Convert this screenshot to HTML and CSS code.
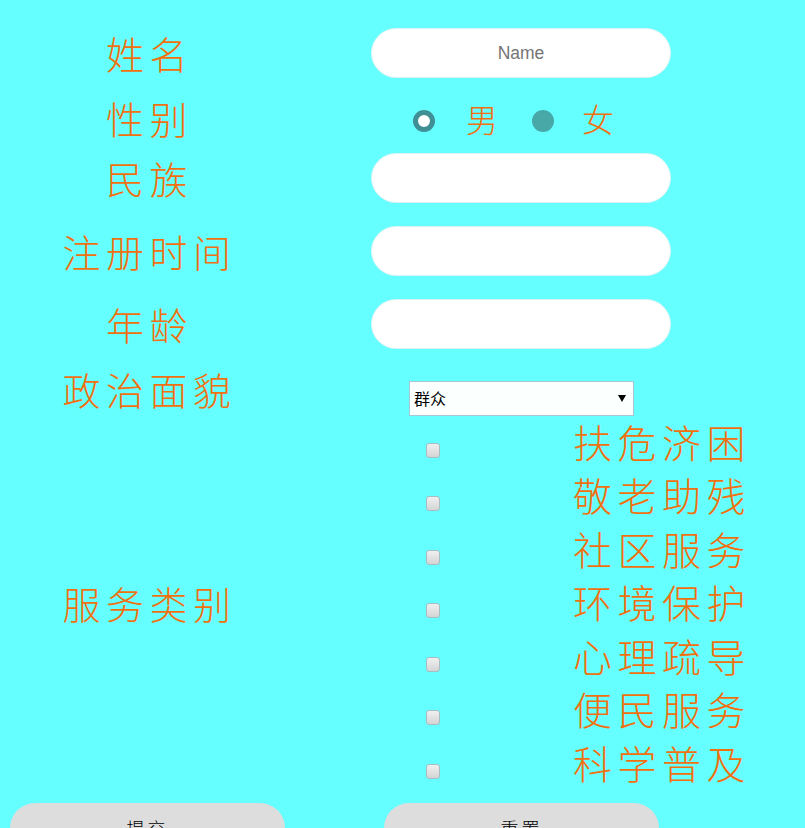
FILE: index.html
```html
<!DOCTYPE html>
<html lang="zh-CN">
<head>
    <meta charset="UTF-8">
    <meta name="viewport" content="width=device-width, initial-scale=1.0">
    <title>志愿者注册</title>
    <link rel="stylesheet" href="styles.css">
</head>
<body>
    <form class="register-form">
        <div class="row row-name">
            <label class="row-label" for="name">姓名</label>
            <div class="row-field">
                <input class="text-input" type="text" id="name" placeholder="Name">
            </div>
        </div>

        <div class="row row-sex">
            <span class="row-label">性别</span>
            <div class="row-field radio-group">
                <input class="radio" type="radio" name="sex" checked>
                <span class="radio-text">男</span>
                <input class="radio" type="radio" name="sex">
                <span class="radio-text">女</span>
            </div>
        </div>

        <div class="row row-nation">
            <label class="row-label" for="nation">民族</label>
            <div class="row-field">
                <input class="text-input" type="text" id="nation">
            </div>
        </div>

        <div class="row row-spaced">
            <label class="row-label" for="regdate">注册时间</label>
            <div class="row-field">
                <input class="text-input" type="text" id="regdate">
            </div>
        </div>

        <div class="row row-spaced">
            <label class="row-label" for="age">年龄</label>
            <div class="row-field">
                <input class="text-input" type="text" id="age">
            </div>
        </div>

        <div class="row row-politics">
            <label class="row-label" for="politics">政治面貌</label>
            <div class="row-field">
                <div class="select-wrap">
                    <select class="select-input" id="politics">
                        <option>群众</option>
                        <option>团员</option>
                        <option>党员</option>
                    </select>
                </div>
            </div>
        </div>

        <div class="row row-services">
            <span class="row-label">服务类别</span>
            <div class="service-list">
                <label class="service-item"><input class="check" type="checkbox"><span class="service-text">扶危济困</span></label>
                <label class="service-item"><input class="check" type="checkbox"><span class="service-text">敬老助残</span></label>
                <label class="service-item"><input class="check" type="checkbox"><span class="service-text">社区服务</span></label>
                <label class="service-item"><input class="check" type="checkbox"><span class="service-text">环境保护</span></label>
                <label class="service-item"><input class="check" type="checkbox"><span class="service-text">心理疏导</span></label>
                <label class="service-item"><input class="check" type="checkbox"><span class="service-text">便民服务</span></label>
                <label class="service-item"><input class="check" type="checkbox"><span class="service-text">科学普及</span></label>
            </div>
        </div>

        <div class="button-row">
            <button class="form-btn" type="submit">提交</button>
            <button class="form-btn" type="reset">重置</button>
        </div>
    </form>
</body>
</html>
```

FILE: styles.css
```css
:root {
    --bg-color: #66ffff;
    --label-color: #f0700f;
}

html, body {
    margin: 0;
    padding: 0;
    height: 828px;
    overflow: hidden;
}

body {
    background-color: var(--bg-color);
    font-family: "Noto Sans CJK SC", sans-serif;
    color: var(--label-color);
}

.register-form {
    padding-top: 28px;
}

.row {
    display: flex;
    align-items: center;
    height: 50px;
}

.row-label {
    width: 291px;
    padding-left: 4px;
    text-align: center;
    font-size: 38px;
    font-weight: 300;
    letter-spacing: 5.5px;
    line-height: 50px;
}

.row-field {
    margin-left: 76px;
    width: 300px;
}

.row-sex {
    margin-top: 18px;
}

.row-sex .row-label {
    margin-top: -6px;
}

.row-nation {
    margin-top: 7px;
}

.row-spaced {
    margin-top: 23px;
}

.text-input {
    display: block;
    box-sizing: border-box;
    width: 300px;
    height: 50px;
    border: 1px solid #d8f4f4;
    border-radius: 25px;
    background-color: #fff;
    text-align: center;
    font-family: "Liberation Sans", sans-serif;
    font-size: 17.5px;
    outline: none;
}

.text-input::placeholder {
    color: #757575;
}

.radio-group {
    display: flex;
    align-items: center;
    padding-left: 42px;
    box-sizing: border-box;
}

.radio {
    appearance: none;
    box-sizing: border-box;
    width: 22px;
    height: 22px;
    margin: 0;
    border-radius: 50%;
    background-color: #48a8a8;
}

.radio:checked {
    background-color: #fff;
    border: 5px solid #3f8f94;
}

.radio-text {
    width: 97px;
    margin-top: -6px;
    padding-left: 31px;
    box-sizing: border-box;
    font-size: 32px;
    font-weight: 300;
    line-height: 50px;
}

.radio-text:last-child {
    padding-left: 28px;
}

.row-politics {
    margin-top: 32px;
    height: 35px;
}

.row-politics .row-label {
    margin-top: -20px;
}

.select-wrap {
    position: relative;
    width: 225px;
    height: 35px;
    margin-left: 38px;
}

.select-wrap::after {
    content: "";
    position: absolute;
    top: 14px;
    right: 8px;
    border-left: 4px solid transparent;
    border-right: 4px solid transparent;
    border-top: 7px solid #000;
    pointer-events: none;
}

.select-input {
    appearance: none;
    box-sizing: border-box;
    display: block;
    width: 225px;
    height: 35px;
    padding: 0 4px 2px;
    border: 1px solid #a9c6d6;
    border-radius: 0;
    background-color: #fbfffe;
    color: #000;
    font-family: "Noto Sans CJK SC", sans-serif;
    font-size: 16px;
}

.row-services {
    height: auto;
}

.row-services .row-label {
    margin-top: -1px;
}

.service-list {
    margin-left: 131px;
}

.service-item {
    display: flex;
    align-items: center;
    height: 53.5px;
}

.check {
    appearance: none;
    box-sizing: border-box;
    flex: none;
    width: 14px;
    height: 15px;
    margin: 15px 0 0;
    border: 1px solid #a8bcc4;
    border-radius: 3px;
    background-image: linear-gradient(#f0f0f0, #d4d4d4);
}

.service-text {
    margin-left: 133px;
    margin-bottom: 4px;
    font-size: 39px;
    font-weight: 300;
    letter-spacing: 5.5px;
    line-height: 50px;
    white-space: nowrap;
}

.button-row {
    display: flex;
    gap: 99px;
    margin-top: 12px;
    padding-left: 10px;
}

.form-btn {
    width: 275px;
    height: 50px;
    border: none;
    border-radius: 25px;
    background-color: #ddd;
    color: #000;
    font-family: "Noto Sans CJK SC", sans-serif;
    font-size: 18px;
    font-weight: 300;
    letter-spacing: 3px;
}
```
